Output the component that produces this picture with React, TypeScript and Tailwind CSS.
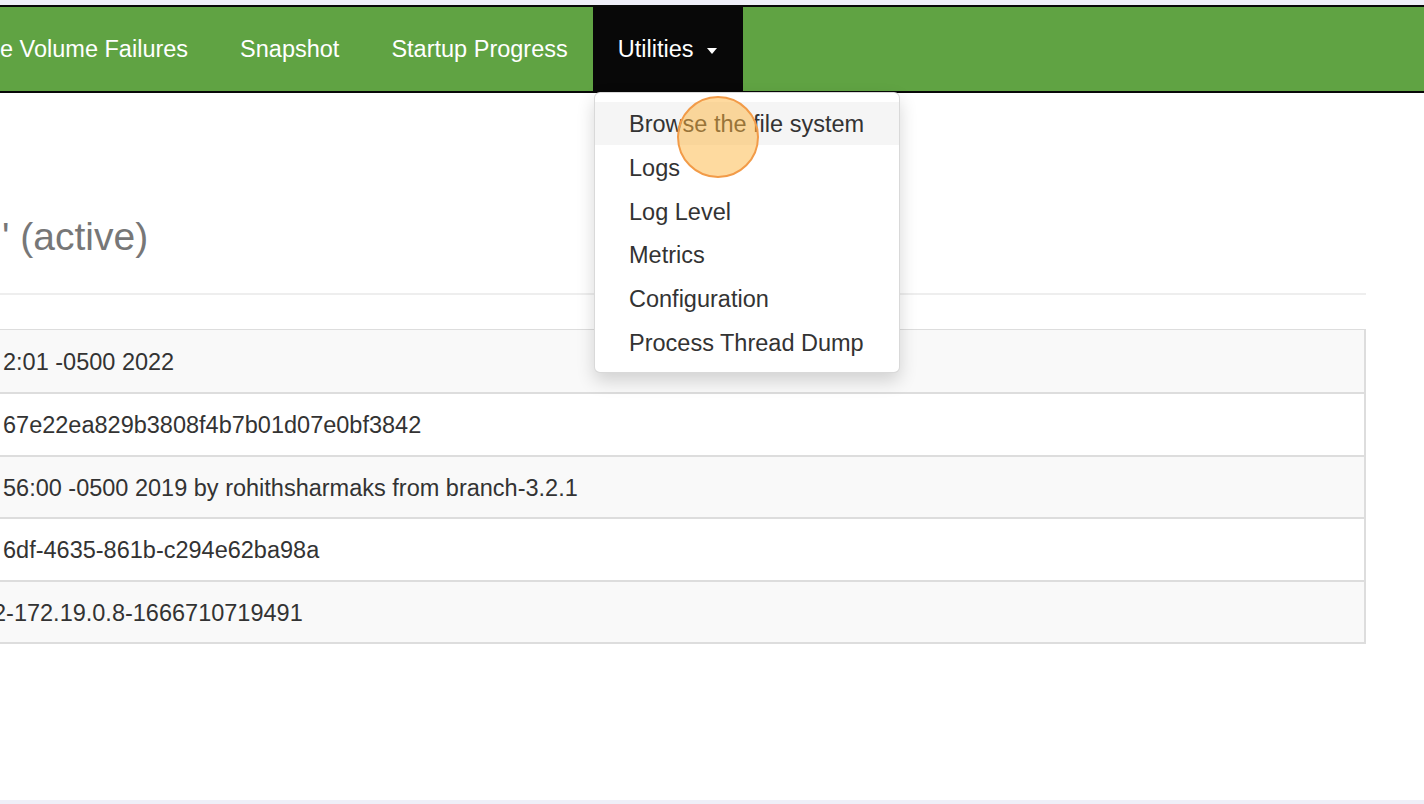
import React from "react";

const rows = [
  { text: "2:01 -0500 2022", shift: "" },
  { text: "67e22ea829b3808f4b7b01d07e0bf3842", shift: "" },
  { text: "56:00 -0500 2019 by rohithsharmaks from branch-3.2.1", shift: "" },
  { text: "6df-4635-861b-c294e62ba98a", shift: "" },
  { text: "2-172.19.0.8-1666710719491", shift: "ml-[-10px]" },
];

const menu = [
  "Browse the file system",
  "Logs",
  "Log Level",
  "Metrics",
  "Configuration",
  "Process Thread Dump",
];

export default function App() {
  return (
    <div
      className="relative w-[1424px] h-[804px] overflow-hidden bg-white flex flex-col"
      style={{ fontFamily: '"Liberation Sans", Arial, Helvetica, sans-serif' }}
    >
      <div className="h-[5px] bg-[#efeff8] shrink-0" />
      <nav className="h-[88px] shrink-0 border-t-2 border-b-2 border-[#080808] bg-[#60a343] flex">
        <ul className="flex ml-[-26px] text-[23.5px] text-white">
          <li className="px-[26px] pt-[1px] flex items-center whitespace-nowrap">e Volume Failures</li>
          <li className="px-[26px] pt-[1px] flex items-center">Snapshot</li>
          <li className="px-[26px] pt-[1px] flex items-center">Startup Progress</li>
          <li className="relative pl-[25px] pt-[1px] flex items-center bg-[#080808] -my-[2px] w-[150px] -ml-[1px]">
            <span>Utilities</span>
            <span className="ml-[14px] mt-[2px] w-0 h-0 border-l-[5px] border-r-[5px] border-t-[6px] border-l-transparent border-r-transparent border-t-white" />
          </li>
        </ul>
      </nav>

      <main className="flex-1 ml-[-14px] w-[1380px]">
        <div className="mt-[122px] h-[43px] leading-[43px] text-[39px] text-[#777] whitespace-nowrap pl-[13px]">
          <span className="ml-[3px]">' (active)</span>
        </div>
        <div className="mt-[35px] border-b-2 border-[#eee]" />
        <div className="mt-[34px] border-2 border-[#ddd] border-t-[1px]">
          {rows.map((r, i) => (
            <div
              key={i}
              className={`h-[62.4px] flex items-center pl-[15px] pt-[3px] text-[23.5px] text-[#333] whitespace-nowrap ${
                i % 2 === 0 ? "bg-[#f9f9f9]" : "bg-white"
              } ${i > 0 ? "border-t-2 border-[#ddd]" : ""}`}
            >
              <span className={r.shift}>{r.text}</span>
            </div>
          ))}
        </div>
      </main>

      <div className="h-[4px] bg-[#efeff8] shrink-0" />

      {/* Dropdown menu */}
      <div className="absolute left-[594px] top-[92px] w-[306px] rounded-[6px] border border-black/15 bg-white py-[8.5px] shadow-[0_8px_18px_rgba(0,0,0,0.16)]">
        {menu.map((m, i) => (
          <div
            key={m}
            className={`h-[43.7px] flex items-center px-[34px] pt-[3px] text-[23.5px] text-[#333] whitespace-nowrap ${
              i === 0 ? "bg-[#f5f5f5]" : ""
            }`}
          >
            {m}
          </div>
        ))}
      </div>

      {/* Click indicator */}
      <div className="absolute left-[677px] top-[96px] w-[82px] h-[82px] rounded-full border-2 border-[#f29b48] bg-[rgba(253,181,63,0.5)]" />
    </div>
  );
}
